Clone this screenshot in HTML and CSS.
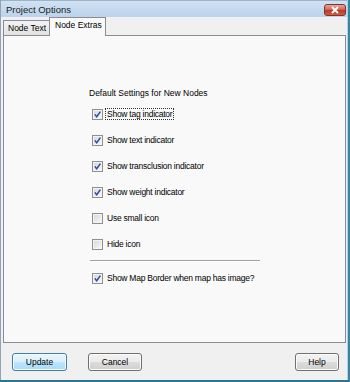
FILE: index.html
```html
<!DOCTYPE html>
<html lang="en">
<head>
    <meta charset="UTF-8">
    <title>Project Options</title>
    <link rel="stylesheet" href="styles.css">
</head>
<body>
    <div class="frame">
        <div class="window">
            <div class="titlebar">
                <span class="title">Project Options</span>
                <span class="close">
                    <svg width="10" height="8" viewBox="0 0 10 8"><path d="M2 1 L8 7 M8 1 L2 7" stroke="#fff" stroke-width="1.8"/></svg>
                </span>
            </div>

            <div class="tabs">
                <div class="tab">Node Text</div>
                <div class="tab selected">Node Extras</div>
            </div>

            <div class="panel">
                <div class="heading">Default Settings for New Nodes</div>

                <div class="row">
                    <span class="box checked"><svg width="9" height="9" viewBox="0 0 9 9"><path d="M1.8 4.4 L3.7 6.8 L7.4 1.6" fill="none" stroke="#2c4aa6" stroke-width="1.5"/></svg></span>
                    <span class="label focus">Show tag indicator</span>
                </div>
                <div class="row">
                    <span class="box checked"><svg width="9" height="9" viewBox="0 0 9 9"><path d="M1.8 4.4 L3.7 6.8 L7.4 1.6" fill="none" stroke="#2c4aa6" stroke-width="1.5"/></svg></span>
                    <span class="label">Show text indicator</span>
                </div>
                <div class="row">
                    <span class="box checked"><svg width="9" height="9" viewBox="0 0 9 9"><path d="M1.8 4.4 L3.7 6.8 L7.4 1.6" fill="none" stroke="#2c4aa6" stroke-width="1.5"/></svg></span>
                    <span class="label">Show transclusion indicator</span>
                </div>
                <div class="row">
                    <span class="box checked"><svg width="9" height="9" viewBox="0 0 9 9"><path d="M1.8 4.4 L3.7 6.8 L7.4 1.6" fill="none" stroke="#2c4aa6" stroke-width="1.5"/></svg></span>
                    <span class="label">Show weight indicator</span>
                </div>
                <div class="row">
                    <span class="box"></span>
                    <span class="label">Use small icon</span>
                </div>
                <div class="row">
                    <span class="box"></span>
                    <span class="label">Hide icon</span>
                </div>

                <div class="separator"></div>

                <div class="row">
                    <span class="box checked"><svg width="9" height="9" viewBox="0 0 9 9"><path d="M1.8 4.4 L3.7 6.8 L7.4 1.6" fill="none" stroke="#2c4aa6" stroke-width="1.5"/></svg></span>
                    <span class="label">Show Map Border when map has image?</span>
                </div>
            </div>

            <div class="buttons">
                <button class="btn default">Update</button>
                <button class="btn cancel">Cancel</button>
                <button class="btn help">Help</button>
            </div>
        </div>
    </div>
</body>
</html>
```

FILE: styles.css
```css
* {
    box-sizing: border-box;
}
body {
    margin: 0;
    font-family: "Liberation Sans", Arial, sans-serif;
    font-size: 8.5px;
    color: #000;
    background: #f0f0f0;
}
.frame {
    width: 350px;
    height: 382px;
    border-right: 2px solid #3a84a6;
    border-bottom: 2px solid #2f7393;
}
.window {
    height: 100%;
    display: flex;
    flex-direction: column;
    background: #f0f0f0;
    border-left: 1px solid #8fa2b6;
    border-right: 1px solid #b0d0e6;
}
.titlebar {
    height: 17px;
    display: flex;
    align-items: center;
    justify-content: space-between;
    padding: 0 1px 0 5px;
    background: linear-gradient(to bottom, #d0e1f3, #bcd3eb);
    border-top: 1px solid #9fb2c6;
}
.title {
    font-size: 9.5px;
    color: #1b1b1b;
}
.close {
    width: 22px;
    height: 12px;
    margin-top: 2px;
    display: flex;
    align-items: center;
    justify-content: center;
    border: 1px solid #7c342b;
    border-radius: 3px;
    background: linear-gradient(to bottom, #e6a89d, #d0665a 45%, #c0392b 55%, #cf5b45);
}
.tabs {
    height: 18px;
    display: flex;
    align-items: flex-end;
    padding-left: 2px;
}
.tab {
    height: 15px;
    width: 47px;
    padding-left: 4px;
    line-height: 14px;
    border: 1px solid #898c95;
    border-bottom: none;
    background: linear-gradient(to bottom, #f3f3f3, #e2e2e2);
}
.tab.selected {
    height: 19px;
    width: 57px;
    margin-left: -1px;
    margin-bottom: -1px;
    padding-left: 5px;
    line-height: 15px;
    background: #f9f9f9;
    position: relative;
    z-index: 1;
}
.panel {
    height: 308px;
    margin: 0 1px 0 2px;
    padding: 52px 0 0 85px;
    border: 1px solid #898c95;
    background: #f9f9f9;
}
.heading {
    height: 11px;
    line-height: 11px;
    margin-bottom: 2px;
}
.row {
    height: 26px;
    display: flex;
    align-items: center;
    padding-left: 3px;
}
.box {
    width: 11px;
    height: 11px;
    display: flex;
    align-items: center;
    justify-content: center;
    border: 1px solid #8e8f8f;
    background: linear-gradient(135deg, #d4d4d4, #fbfbfb);
    box-shadow: inset 0 0 0 1px #f4f4f4;
}
.label {
    margin-left: 2px;
    padding: 0 1px;
    line-height: 10px;
    letter-spacing: -0.25px;
    border: 1px solid transparent;
}
.label.focus {
    border: 1px dotted #333;
}
.separator {
    width: 170px;
    margin: 3px 0 3px 1px;
    border-top: 1px solid #a0a0a0;
    border-bottom: 1px solid #fff;
}
.buttons {
    display: flex;
    padding: 10px 8px 0 11px;
}
.btn {
    height: 18px;
    font-family: inherit;
    font-size: 8.5px;
    color: #000;
    padding: 0;
    border: 1px solid #707070;
    border-radius: 3px;
    background: linear-gradient(to bottom, #f3f3f3, #ebebeb 48%, #dcdcdc 52%, #cfcfcf);
    box-shadow: inset 0 0 0 1px #fbfbfb;
}
.btn.default {
    width: 55px;
    border-color: #3c7fb1;
    background: linear-gradient(to bottom, #eaf6fd, #d9f0fc 48%, #bee6fd 52%, #a7d9f5);
}
.btn.cancel {
    width: 54px;
    margin-left: 21px;
}
.btn.help {
    width: 44px;
    margin-left: auto;
}
```
